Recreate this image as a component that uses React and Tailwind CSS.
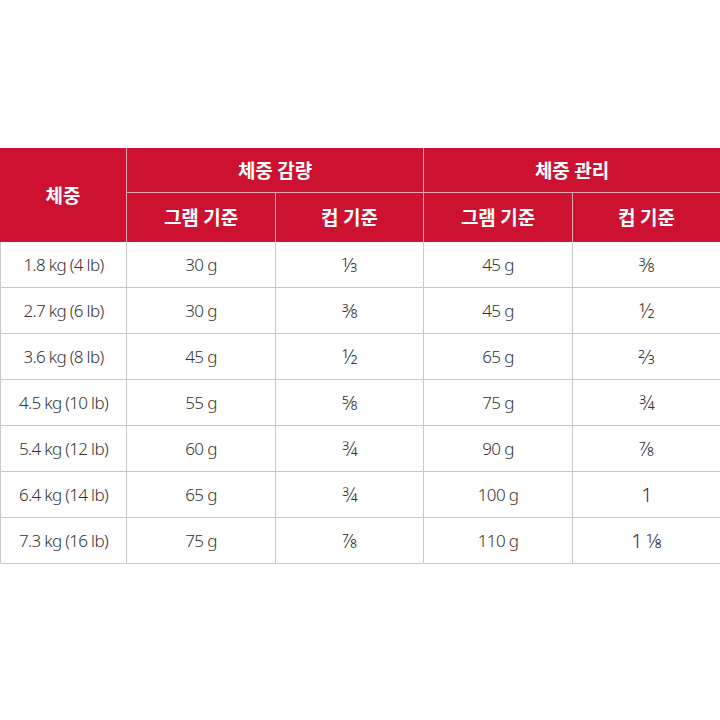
import React from 'react';

const rows = [
  ['1.8 kg (4 lb)', '30 g', '⅓', '45 g', '⅜'],
  ['2.7 kg (6 lb)', '30 g', '⅜', '45 g', '½'],
  ['3.6 kg (8 lb)', '45 g', '½', '65 g', '⅔'],
  ['4.5 kg (10 lb)', '55 g', '⅝', '75 g', '¾'],
  ['5.4 kg (12 lb)', '60 g', '¾', '90 g', '⅞'],
  ['6.4 kg (14 lb)', '65 g', '¾', '100 g', '1'],
  ['7.3 kg (16 lb)', '75 g', '⅞', '110 g', '1 ⅛'],
];

const head = "flex items-center justify-center bg-[#cc1230] text-white font-bold text-[19px] border-[#e9a3ac]";

export default function App() {
  return (
    <div className="w-[720px] h-[720px] bg-white pt-[148px]" style={{ fontFamily: '"Noto Sans", "Noto Sans CJK KR", sans-serif' }}>
      <div className="grid grid-cols-[127px_149px_148px_149px_147px] grid-rows-[45px_49px]" style={{ fontFamily: '"Noto Sans CJK KR", "Noto Sans", sans-serif' }}>
        <div className={`${head} row-span-2 border-r`}>체중</div>
        <div className={`${head} col-span-2 border-r border-b`}>체중 감량</div>
        <div className={`${head} col-span-2 border-b`}>체중 관리</div>
        <div className={`${head} border-r`}>그램 기준</div>
        <div className={`${head} border-r`}>컵 기준</div>
        <div className={`${head} border-r`}>그램 기준</div>
        <div className={head}>컵 기준</div>
      </div>
      <div className="grid grid-cols-[127px_149px_148px_149px_147px] auto-rows-[46px] text-[17px] font-light text-[#333] tracking-[-0.04em]">
        {rows.map((r, i) =>
          r.map((c, j) => (
            <div
              key={`${i}-${j}`}
              className={`flex items-center justify-center border-b border-[#c9c9c9] ${j < 4 ? 'border-r' : ''} ${j === 0 ? 'border-l' : ''}`}
            >
              {j === 2 || j === 4 ? (
                <span className="text-[20px] leading-none">{c}</span>
              ) : (
                c
              )}
            </div>
          ))
        )}
      </div>
    </div>
  );
}
